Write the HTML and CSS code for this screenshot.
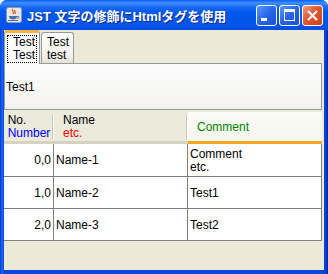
FILE: index.html
```html
<!DOCTYPE html>
<html lang="ja">
<head>
    <meta charset="UTF-8">
    <title>JST 文字の修飾にHtmlタグを使用</title>
    <link rel="stylesheet" href="styles.css">
</head>
<body>
    <div class="window">
        <!-- Title bar -->
        <div class="titlebar">
            <span class="app-icon">
                <svg width="16" height="16" viewBox="0 0 16 16">
                    <rect x="0.5" y="0.5" width="15" height="15" rx="2" fill="#e9e7e0" stroke="#8a9bb8"/>
                    <path d="M7 2c-2 2 2 3 0 5M9 3c-1 1.5 1 2 0 4" stroke="#e0521d" stroke-width="1.2" fill="none"/>
                    <path d="M3 9h8c0 2.5-1.5 3.5-4 3.5S3 11.5 3 9z" fill="#4a6fb0"/>
                    <path d="M11 9.5h1.5c0.8 0 0.8 2-1.5 2" stroke="#4a6fb0" fill="none"/>
                    <rect x="2" y="13" width="10" height="1" fill="#4a6fb0"/>
                </svg>
            </span>
            <span class="title">JST 文字の修飾にHtmlタグを使用</span>
            <div class="controls">
                <span class="btn"><span class="min-glyph"></span></span>
                <span class="btn"><span class="max-glyph"></span></span>
                <span class="btn close">
                    <svg width="13" height="13" viewBox="0 0 13 13">
                        <path d="M2 2L11 11M11 2L2 11" stroke="#fff" stroke-width="2.2"/>
                    </svg>
                </span>
            </div>
        </div>

        <div class="client">
            <!-- Tabs -->
            <div class="tabs">
                <div class="tab active"><span class="focus">Test<br>Test</span></div>
                <div class="tab">Test<br>test</div>
            </div>
            <div class="tab-panel">Test1</div>

            <!-- Table -->
            <div class="grid">
                <div class="th"><span>No.<br><span class="blue">Number</span></span></div>
                <div class="th name"><span>Name<br><span class="red">etc.</span></span></div>
                <div class="th comment"><span class="green">Comment</span></div>

                <div class="td num">0,0</div>
                <div class="td">Name-1</div>
                <div class="td multi">Comment<br>etc.</div>

                <div class="td num">1,0</div>
                <div class="td">Name-2</div>
                <div class="td">Test1</div>

                <div class="td num">2,0</div>
                <div class="td">Name-3</div>
                <div class="td">Test2</div>
            </div>
        </div>
    </div>
</body>
</html>
```

FILE: styles.css
```css
/* General Styles */
body {
    margin: 0;
    padding: 0;
    font-family: "Liberation Sans", "Noto Sans CJK JP", sans-serif;
    font-size: 12px;
    color: #000;
}

.window {
    width: 328px;
    height: 274px;
    display: flex;
    flex-direction: column;
    background: linear-gradient(to right, #0735cf 0px, #166af5 2px, #0a48dc 4px, #0a48dc 324px, #0a3fd0 326px, #05229c 328px);
    box-sizing: border-box;
    border-radius: 7px 7px 0 0;
    overflow: hidden;
}

/* Title bar */
.titlebar {
    height: 30px;
    display: flex;
    align-items: center;
    padding: 0 5px 0 6px;
    background: linear-gradient(#0a5ff4 0%, #3e8ffb 10%, #1d6df5 22%, #0058ee 40%, #0055e9 80%, #0150e0 100%);
    flex-shrink: 0;
}

.app-icon {
    width: 16px;
    height: 16px;
    display: flex;
}

.title {
    margin-left: 5px;
    color: #fff;
    font-weight: bold;
    font-size: 13px;
    text-shadow: 1px 1px 0 #0c2a8c;
    flex: 1;
    white-space: nowrap;
}

.controls {
    display: flex;
    gap: 2px;
}

.btn {
    width: 21px;
    height: 21px;
    box-sizing: border-box;
    border: 1px solid #fff;
    border-radius: 3px;
    background: linear-gradient(135deg, #5b97fb 0%, #2865e8 50%, #1b50d8 100%);
    display: flex;
    align-items: center;
    justify-content: center;
}

.btn.close {
    background: linear-gradient(135deg, #f0a184 0%, #e1562f 45%, #c9401a 100%);
}

.min-glyph {
    width: 6px;
    height: 3px;
    background: #fff;
    margin: 8px 6px 0 0;
}

.max-glyph {
    width: 9px;
    height: 8px;
    border: 1px solid #fff;
    border-top-width: 3px;
}

/* Client area */
.client {
    flex: 1;
    margin: 0 4px 4px 4px;
    background: #ece9d8;
    display: flex;
    flex-direction: column;
}

.tabs {
    display: flex;
    align-items: flex-end;
    height: 33px;
}

.tab {
    height: 31px;
    box-sizing: border-box;
    padding: 3px 4px 0 5px;
    border: 1px solid #919b9c;
    border-bottom: none;
    border-radius: 3px 3px 0 0;
    background: linear-gradient(#ffffff, #f3f2ec 70%, #e4e2d6);
    line-height: 13px;
    margin-left: 1px;
}

.tab.active {
    width: 36px;
    height: 34px;
    margin: 0 0 -1px 0;
    padding: 2px 0 0 2px;
    border-top: 3px solid #f9b142;
    background: #fcfcfe;
    position: relative;
    z-index: 1;
}

.focus {
    display: block;
    width: 30px;
    height: 28px;
    box-sizing: border-box;
    border: 1px dotted #000;
    padding: 0 0 0 5px;
    line-height: 13px;
}

.tab-panel {
    height: 47px;
    margin-right: 2px;
    box-sizing: border-box;
    border: 1px solid #919b9c;
    background: linear-gradient(#fcfcfe, #f4f3ee);
    display: flex;
    align-items: center;
    padding: 1px 0 0 1px;
}

/* Table */
.grid {
    margin-top: 2px;
    margin-right: 2px;
    display: grid;
    grid-template-columns: 50px 134px 134px;
    grid-template-rows: 32px 33px 32px 32px;
    background: #fff;
}

.th {
    background: #ebeadb;
    border-bottom: 3px solid #d6d2c2;
    position: relative;
    display: flex;
    align-items: center;
    justify-content: center;
    line-height: 13px;
    padding-top: 1px;
}

.th::after {
    content: "";
    position: absolute;
    right: 1px;
    top: 3px;
    bottom: 2px;
    width: 1px;
    background: #c7c5b2;
    box-shadow: 1px 0 0 #fff;
}

.th.name {
    justify-content: flex-start;
    padding-left: 9px;
}

.th.comment {
    background: linear-gradient(#fbfbf7, #f6f5ef);
    border-bottom: 3px solid #f8a91e;
    justify-content: flex-start;
    padding-left: 9px;
}

.th.comment::after {
    display: none;
}

.blue {
    color: #0000ff;
}

.red {
    color: #ff0000;
}

.green {
    color: #008000;
}

.td {
    border-right: 1px solid #808080;
    border-bottom: 1px solid #808080;
    display: flex;
    align-items: center;
    padding-left: 2px;
    white-space: nowrap;
}

.td.num {
    justify-content: flex-end;
    padding: 0 2px 0 0;
}

.td.multi {
    align-items: flex-start;
    padding-top: 4px;
    line-height: 13px;
}
```
